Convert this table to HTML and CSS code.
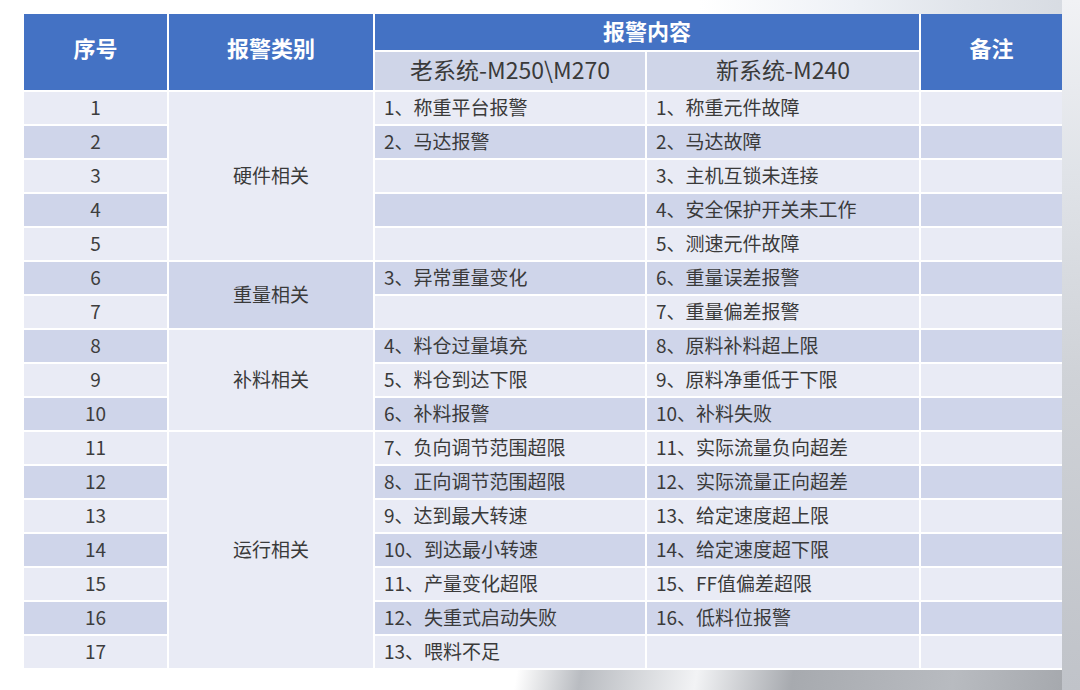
FILE: index.html
```html
<!DOCTYPE html>
<html lang="zh-CN">
<head>
<meta charset="utf-8">
<title>报警内容对照表</title>
<link rel="stylesheet" href="styles.css">
</head>
<body>
<div class="stage">
  <div class="table">
    <div class="cell head span-r2">序号</div>
    <div class="cell head span-r2">报警类别</div>
    <div class="cell head span-c2 head-top">报警内容</div>
    <div class="cell head span-r2">备注</div>
    <div class="cell sub">老系统-M250\M270</div>
    <div class="cell sub">新系统-M240</div>

    <div class="cell num lt">1</div>
    <div class="cell cat lt span-5">硬件相关</div>
    <div class="cell txt lt">1、称重平台报警</div>
    <div class="cell txt lt">1、称重元件故障</div>
    <div class="cell lt"></div>

    <div class="cell num dk">2</div>
    <div class="cell txt dk">2、马达报警</div>
    <div class="cell txt dk">2、马达故障</div>
    <div class="cell dk"></div>

    <div class="cell num lt">3</div>
    <div class="cell txt lt"></div>
    <div class="cell txt lt">3、主机互锁未连接</div>
    <div class="cell lt"></div>

    <div class="cell num dk">4</div>
    <div class="cell txt dk"></div>
    <div class="cell txt dk">4、安全保护开关未工作</div>
    <div class="cell dk"></div>

    <div class="cell num lt">5</div>
    <div class="cell txt lt"></div>
    <div class="cell txt lt">5、测速元件故障</div>
    <div class="cell lt"></div>

    <div class="cell num dk">6</div>
    <div class="cell cat dk span-2">重量相关</div>
    <div class="cell txt dk">3、异常重量变化</div>
    <div class="cell txt dk">6、重量误差报警</div>
    <div class="cell dk"></div>

    <div class="cell num lt">7</div>
    <div class="cell txt lt"></div>
    <div class="cell txt lt">7、重量偏差报警</div>
    <div class="cell lt"></div>

    <div class="cell num dk">8</div>
    <div class="cell cat lt span-3">补料相关</div>
    <div class="cell txt dk">4、料仓过量填充</div>
    <div class="cell txt dk">8、原料补料超上限</div>
    <div class="cell dk"></div>

    <div class="cell num lt">9</div>
    <div class="cell txt lt">5、料仓到达下限</div>
    <div class="cell txt lt">9、原料净重低于下限</div>
    <div class="cell lt"></div>

    <div class="cell num dk">10</div>
    <div class="cell txt dk">6、补料报警</div>
    <div class="cell txt dk">10、补料失败</div>
    <div class="cell dk"></div>

    <div class="cell num lt">11</div>
    <div class="cell cat lt span-7">运行相关</div>
    <div class="cell txt lt">7、负向调节范围超限</div>
    <div class="cell txt lt">11、实际流量负向超差</div>
    <div class="cell lt"></div>

    <div class="cell num dk">12</div>
    <div class="cell txt dk">8、正向调节范围超限</div>
    <div class="cell txt dk">12、实际流量正向超差</div>
    <div class="cell dk"></div>

    <div class="cell num lt">13</div>
    <div class="cell txt lt">9、达到最大转速</div>
    <div class="cell txt lt">13、给定速度超上限</div>
    <div class="cell lt"></div>

    <div class="cell num dk">14</div>
    <div class="cell txt dk">10、到达最小转速</div>
    <div class="cell txt dk">14、给定速度超下限</div>
    <div class="cell dk"></div>

    <div class="cell num lt">15</div>
    <div class="cell txt lt">11、产量变化超限</div>
    <div class="cell txt lt">15、FF值偏差超限</div>
    <div class="cell lt"></div>

    <div class="cell num dk">16</div>
    <div class="cell txt dk">12、失重式启动失败</div>
    <div class="cell txt dk">16、低料位报警</div>
    <div class="cell dk"></div>

    <div class="cell num lt">17</div>
    <div class="cell txt lt">13、喂料不足</div>
    <div class="cell txt lt"></div>
    <div class="cell lt"></div>
  </div>
</div>
</body>
</html>
```

FILE: styles.css
```css
html, body {
  margin: 0;
  padding: 0;
}

body {
  width: 1080px;
  height: 690px;
  overflow: hidden;
  font-family: "Noto Sans CJK SC", "Noto Sans", sans-serif;
  color: #3a3a3a;
  background-color: #ffffff;
  background-image:
    linear-gradient(180deg, #f1f2f5 0%, #e0e3e8 25%, #cfd2d7 55%, #c0c3c9 100%),
    linear-gradient(100deg, #ffffff 0%, #ffffff 12%, #b9bcc1 22%, #f2f3f5 40%, #a7aaaf 55%, #b8bbc0 80%, #a3a6ab 100%),
    linear-gradient(90deg, #ffffff 0%, #eef1f6 40%, #e0e4ea 70%, #d6dae1 100%);
  background-repeat: no-repeat;
  background-size: 18px 690px, 640px 20px, 380px 14px;
  background-position: 1062px 0, 440px 670px, 700px 0;
}

.stage {
  padding: 14px 0 0 24px;
}

.table {
  display: grid;
  grid-template-columns: 143px 204px 270px 272px 141px;
  grid-template-rows: 36px 38px repeat(17, 32px);
  gap: 2px;
  width: 1038px;
  background: #ffffff;
}

.cell {
  display: flex;
  align-items: center;
  justify-content: center;
  font-size: 19px;
  line-height: 1;
  white-space: nowrap;
  overflow: hidden;
  padding-bottom: 3px;
  box-sizing: border-box;
}

.head {
  background: #4472c4;
  color: #ffffff;
  font-size: 22px;
  font-weight: 700;
}

.head-top {
  padding-bottom: 4px;
}

.sub {
  background: #cfd5e8;
  color: #3a3a3a;
  font-size: 23px;
  font-weight: 400;
  padding-bottom: 4px;
}

.span-r2 { grid-row: span 2; padding-bottom: 10px; }
.span-c2 { grid-column: span 2; }
.span-2 { grid-row: span 2; }
.span-3 { grid-row: span 3; }
.span-5 { grid-row: span 5; }
.span-7 { grid-row: span 7; }

.lt { background: #e9ebf5; }
.dk { background: #cfd5ea; }

.num {
  color: #3d3d3d;
}

.txt {
  justify-content: flex-start;
  padding-left: 9px;
}
```
